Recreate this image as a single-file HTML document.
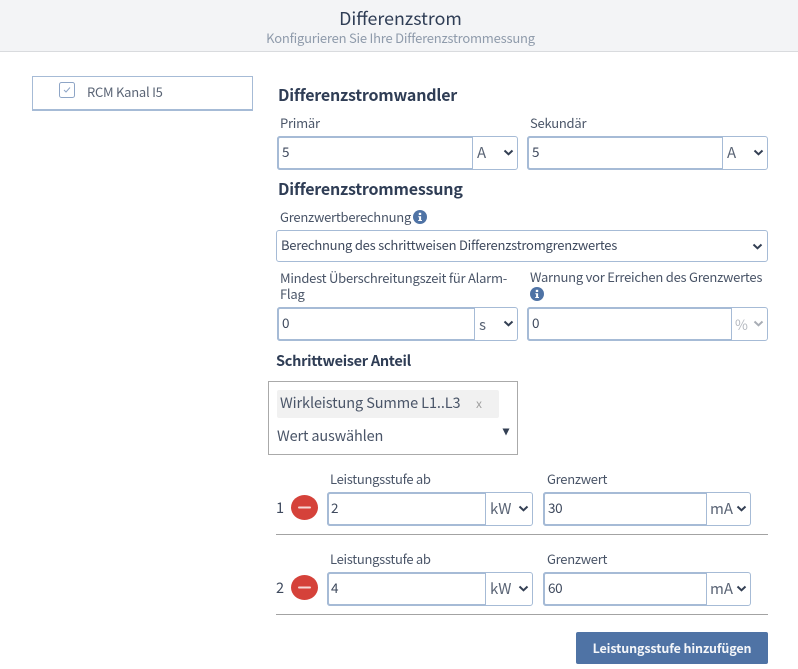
<!DOCTYPE html>
<html lang="de"><head><meta charset="utf-8"><title>Differenzstrom</title>
<style>
html,body{margin:0;padding:0;background:#fff}
body{width:798px;height:669px;position:relative;overflow:hidden;font-family:"Noto Sans CJK JP","Liberation Sans",sans-serif;color:#333f53;font-size:14px}
.a{position:absolute;white-space:nowrap;line-height:20px}
.hd{left:0;top:0;width:798px;height:51px;background:#f3f4f6;border-bottom:1px solid #d9dbde}
.h{font-weight:700;font-size:16px;letter-spacing:-.2px;color:#2f3d55}
.l{font-size:13px;letter-spacing:-.24px;color:#4a5568}
.box{position:absolute;box-sizing:border-box;border:1px solid #a6bbd6;border-radius:3px;background:#fff}
.inp{position:absolute;box-sizing:border-box;border:2px solid #a6bbd6;border-right-width:1px;border-radius:3px 0 0 3px;background:#fff;left:-1px;top:-1px;bottom:-1px}
.v{position:absolute;font-size:13.500px;letter-spacing:-.4px;line-height:20px;color:#3f4a5e;white-space:nowrap}
.u{position:absolute;font-size:15px;line-height:20px;color:#5a6475;white-space:nowrap}
svg{position:absolute;display:block}
.hr{position:absolute;left:276px;width:492px;height:1px;background:#a3a3a3}
</style></head><body>
<div class="a hd"></div>
<div class="a" style="left:0;width:801px;text-align:center;top:7px;font-size:17.800px;line-height:22px;color:#2f3d55">Differenzstrom</div>
<div class="a" style="left:0;width:801px;text-align:center;top:28px;font-size:13px;letter-spacing:-.22px;color:#8f9bab">Konfigurieren Sie Ihre Differenzstrommessung</div>

<div class="box" style="left:32px;top:76px;width:221px;height:35px;border-width:1px;border-bottom-width:2px;border-radius:0;border-color:#a6bbd6"></div>
<svg style="left:59px;top:82px" width="16" height="16" viewBox="0 0 16 16"><rect x=".5" y=".5" width="15" height="15" rx="2" fill="#fff" stroke="#8ea5c6"/><path d="M5 8l2 2 4-4.500" fill="none" stroke="#8ea5c6"/></svg>
<div class="a" style="left:87px;top:82px;font-size:13px;letter-spacing:-.25px;color:#5a6475">RCM Kanal I5</div>

<div class="a h" style="left:278px;top:84px">Differenzstromwandler</div>
<div class="a l" style="left:280px;top:113px">Primär</div>
<div class="a l" style="left:530px;top:113px">Sekundär</div>

<div class="box" style="left:277px;top:136px;width:241px;height:34px"><div class="inp" style="width:196px"></div></div>
<div class="v" style="left:282px;top:141px">5</div>
<div class="u" style="left:477px;top:143px">A</div>
<svg style="left:503px;top:149px" width="11" height="7" viewBox="0 0 11 7"><path d="M1.500 1.500L5.500 5.300 9.500 1.500" fill="none" stroke="#333f53" stroke-width="2"/></svg>

<div class="box" style="left:527px;top:136px;width:241px;height:34px"><div class="inp" style="width:196px"></div></div>
<div class="v" style="left:532px;top:141px">5</div>
<div class="u" style="left:727px;top:143px">A</div>
<svg style="left:753px;top:149px" width="11" height="7" viewBox="0 0 11 7"><path d="M1.500 1.500L5.500 5.300 9.500 1.500" fill="none" stroke="#333f53" stroke-width="2"/></svg>

<div class="a h" style="left:278px;top:178px">Differenzstrommessung</div>
<div class="a l" style="left:280px;top:207px">Grenzwertberechnung</div>
<svg style="left:413px;top:210px" width="14" height="14" viewBox="0 0 14 14"><circle cx="7" cy="7" r="7" fill="#4f73a5"/><rect x="5.800" y="2.800" width="2.400" height="2.200" fill="#fff"/><path d="M5.300 6.200H8.100V10H9V11H5.200V10H6.100V7.200H5.300Z" fill="#fff"/></svg>

<div class="box" style="left:276px;top:230px;width:492px;height:32px"></div>
<div class="v" style="left:281px;top:235px;font-size:13px;letter-spacing:-.23px">Berechnung des schrittweisen Differenzstromgrenzwertes</div>
<svg style="left:752px;top:243px" width="11" height="7" viewBox="0 0 11 7"><path d="M1.500 1.500L5.500 5.300 9.500 1.500" fill="none" stroke="#333f53" stroke-width="2"/></svg>

<div class="a l" style="left:280px;top:268px">Mindest Überschreitungszeit für Alarm-</div>
<div class="a l" style="left:280px;top:284px">Flag</div>
<div class="a l" style="left:530px;top:267px">Warnung vor Erreichen des Grenzwertes</div>
<svg style="left:530px;top:287px" width="14" height="14" viewBox="0 0 14 14"><circle cx="7" cy="7" r="7" fill="#4f73a5"/><rect x="5.800" y="2.800" width="2.400" height="2.200" fill="#fff"/><path d="M5.300 6.200H8.100V10H9V11H5.200V10H6.100V7.200H5.300Z" fill="#fff"/></svg>

<div class="box" style="left:277px;top:307px;width:241px;height:34px"><div class="inp" style="width:198px"></div></div>
<div class="v" style="left:282px;top:312px">0</div>
<div class="u" style="left:479px;top:315px">s</div>
<svg style="left:503px;top:320px" width="11" height="7" viewBox="0 0 11 7"><path d="M1.500 1.500L5.500 5.300 9.500 1.500" fill="none" stroke="#333f53" stroke-width="2"/></svg>

<div class="box" style="left:527px;top:307px;width:241px;height:34px"><div class="inp" style="width:205px"></div></div>
<div class="v" style="left:532px;top:312px">0</div>
<div class="u" style="left:735px;top:315px;font-size:14px;color:#b5b9c0">%</div>
<svg style="left:753px;top:320px" width="11" height="7" viewBox="0 0 11 7"><path d="M1.500 1.500L5.500 5.300 9.500 1.500" fill="none" stroke="#a8adb5" stroke-width="2"/></svg>

<div class="a h" style="left:276px;top:351px;font-size:14.500px;letter-spacing:-.3px">Schrittweiser Anteil</div>

<div class="box" style="left:268px;top:381px;width:250px;height:74px;border-color:#aaa;border-radius:0"></div>
<div class="a" style="left:277px;top:390px;width:222px;height:28px;background:#f1f1f1;border-radius:2px"></div>
<div class="a" style="left:280px;top:393px;font-size:14.500px;letter-spacing:-.1px;color:#4a5568">Wirkleistung Summe L1..L3</div>
<div class="a" style="left:476px;top:394px;font-size:12px;color:#a0a0a0">x</div>
<div class="a" style="left:277px;top:426px;font-size:14.500px;letter-spacing:-.15px;color:#4a5568">Wert auswählen</div>
<svg style="left:502px;top:428px" width="8" height="8" viewBox="0 0 8 8"><path d="M.5 .5H7.500L4 7.500Z" fill="#333f53"/></svg>

<div class="a l" style="left:330px;top:469px;letter-spacing:-.3px">Leistungsstufe ab</div>
<div class="a l" style="left:547px;top:469px;letter-spacing:-.29px">Grenzwert</div>
<div class="v" style="left:276px;top:498px;font-size:14.500px;letter-spacing:0">1</div>
<svg style="left:291px;top:495px" width="27" height="25" viewBox="0 0 27 25"><ellipse cx="13.500" cy="12.500" rx="13.500" ry="12.500" fill="#d5423a"/><rect x="7" y="11.500" width="13" height="2" rx="1" fill="#f6d8d5"/></svg>
<div class="box" style="left:327px;top:492px;width:206px;height:34px"><div class="inp" style="width:159px"></div></div>
<div class="v" style="left:331px;top:497px">2</div>
<div class="u" style="left:490px;top:499px">kW</div>
<svg style="left:518px;top:505px" width="11" height="7" viewBox="0 0 11 7"><path d="M1.500 1.500L5.500 5.300 9.500 1.500" fill="none" stroke="#333f53" stroke-width="2"/></svg>
<div class="box" style="left:543px;top:492px;width:208px;height:34px"><div class="inp" style="width:164px"></div></div>
<div class="v" style="left:548px;top:497px">30</div>
<div class="u" style="left:710px;top:499px">mA</div>
<svg style="left:736px;top:505px" width="11" height="7" viewBox="0 0 11 7"><path d="M1.500 1.500L5.500 5.300 9.500 1.500" fill="none" stroke="#333f53" stroke-width="2"/></svg>
<div class="hr" style="top:534px"></div>

<div class="a l" style="left:330px;top:549px;letter-spacing:-.3px">Leistungsstufe ab</div>
<div class="a l" style="left:547px;top:549px;letter-spacing:-.29px">Grenzwert</div>
<div class="v" style="left:276px;top:578px;font-size:14.500px;letter-spacing:0">2</div>
<svg style="left:291px;top:575px" width="27" height="25" viewBox="0 0 27 25"><ellipse cx="13.500" cy="12.500" rx="13.500" ry="12.500" fill="#d5423a"/><rect x="7" y="11.500" width="13" height="2" rx="1" fill="#f6d8d5"/></svg>
<div class="box" style="left:327px;top:572px;width:206px;height:34px"><div class="inp" style="width:159px"></div></div>
<div class="v" style="left:331px;top:577px">4</div>
<div class="u" style="left:490px;top:579px">kW</div>
<svg style="left:518px;top:585px" width="11" height="7" viewBox="0 0 11 7"><path d="M1.500 1.500L5.500 5.300 9.500 1.500" fill="none" stroke="#333f53" stroke-width="2"/></svg>
<div class="box" style="left:543px;top:572px;width:208px;height:34px"><div class="inp" style="width:164px"></div></div>
<div class="v" style="left:548px;top:577px">60</div>
<div class="u" style="left:710px;top:579px">mA</div>
<svg style="left:736px;top:585px" width="11" height="7" viewBox="0 0 11 7"><path d="M1.500 1.500L5.500 5.300 9.500 1.500" fill="none" stroke="#333f53" stroke-width="2"/></svg>
<div class="hr" style="top:614px"></div>

<div class="a" style="left:576px;top:632px;width:192px;height:32px;background:#4f73a5;border-radius:2px;color:#f4f6f9;font-weight:700;font-size:12.500px;letter-spacing:-.12px;line-height:32px;text-align:center">Leistungsstufe hinzufügen</div>
</body></html>
